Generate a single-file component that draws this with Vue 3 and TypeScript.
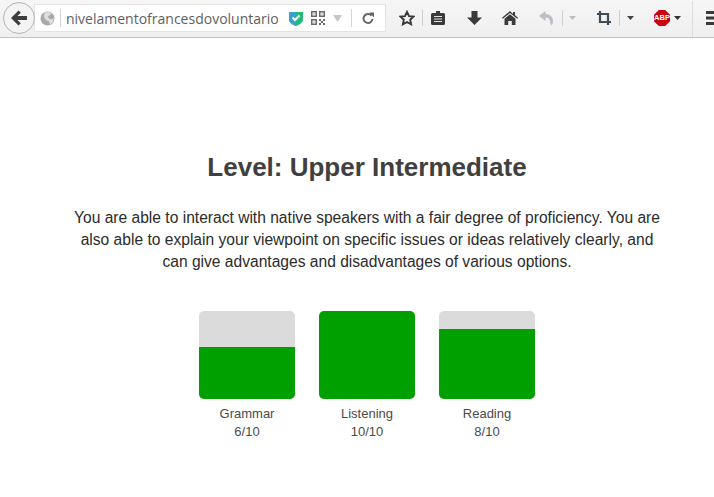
<script setup lang="ts">
interface Score { name: string; value: number }
const barHeight = 88
const scores: Score[] = [
  { name: 'Grammar', value: 6 },
  { name: 'Listening', value: 10 },
  { name: 'Reading', value: 8 },
]
const fillHeight = (value: number): string => Math.floor((barHeight * value) / 10) + 'px'
</script>

<template>
  <div class="page">
    <header class="toolbar">
      <button class="back">
        <svg width="18" height="16" viewBox="0 0 18 16"><path d="M8.500 0.500 1 8l7.500 7.500 2.300-2.300L7.400 10H17V6H7.400l3.400-3.200z" fill="#3d3d3d"/></svg>
      </button>
      <div class="urlbar">
        <svg class="globe" width="15" height="15" viewBox="0 0 15 15"><circle cx="7.500" cy="7.500" r="7" fill="#a9a9a9"/><path d="M4.500 1.500 9 1l2.500 1.800L8 5.500l1 2.300 3 .4 1.700-1.400-.7 4-3 3-1-3.600-3-1-2-3.200z" fill="#dedede"/></svg>
        <span class="vsep first"></span>
        <span class="url">nivelamentofrancesdovoluntario</span>
        <svg class="shield" width="14" height="15" viewBox="0 0 14 15"><path d="M0 1h14v7.500c0 3-3 5-7 6.500-4-1.500-7-3.500-7-6.500z" fill="#25b97c"/><path d="M0 1h7v14c-4-1.500-7-3.500-7-6.500z" fill="#3c9fd8"/><path d="m3.500 6.500 2.500 2.500 4.500-4.500" fill="none" stroke="#fff" stroke-width="2"/></svg>
        <svg class="qr" width="14" height="14" viewBox="0 0 14 14" fill="#6a6a6a"><path d="M0 0h6v6H0zm1.500 1.500v3h3v-3zM8 0h6v6H8zm1.500 1.500v3h3v-3zM0 8h6v6H0zm1.500 1.500v3h3v-3z" fill-rule="evenodd"/><path d="M2.500 2.500h1v1h-1zm8 0h1v1h-1zm-8 8h1v1h-1zM8 8h2v2H8zm4 0h2v2h-2zm-2 2h2v2h-2zm-2 2h2v2H8zm4 0h2v2h-2z"/></svg>
        <svg class="drop" width="9" height="7" viewBox="0 0 9 7"><path d="M0 0h9L4.500 7z" fill="#c6c6c6"/></svg>
        <span class="vsep second"></span>
        <svg class="reload" width="12" height="12" viewBox="0 0 12 12"><path d="M9.500 3.600A4.500 4.500 0 1 0 10.500 7" fill="none" stroke="#666" stroke-width="2"/><path d="M7 0.500h5V5.500z" fill="#666"/></svg>
      </div>
      <div class="tools">
        <svg class="t-star" width="16" height="16" viewBox="0 0 16 16"><path d="m8 1.800 2 4.300 4.500.5-3.300 3.100.9 4.600L8 12l-4.100 2.300.9-4.600L1.500 6.600 6 6.100z" fill="none" stroke="#383838" stroke-width="1.900"/></svg>
        <span class="tsep s1"></span>
        <svg class="t-clip" width="14" height="14" viewBox="0 0 14 14"><path d="M5 0h4v2h3.500A1.500 1.500 0 0 1 14 3.500v9a1.500 1.500 0 0 1-1.500 1.500h-11A1.500 1.500 0 0 1 0 12.500v-9A1.500 1.500 0 0 1 1.500 2H5z" fill="#3a3a3a"/><path d="M3 5h8v1H3zm0 2.500h8v1H3zM3 10h8v1H3z" fill="#e0e0e0"/></svg>
        <svg class="t-down" width="15" height="14" viewBox="0 0 15 14"><path d="M4.500 0h6v6.500H15L7.500 14 0 6.500h4.500z" fill="#3a3a3a"/></svg>
        <svg class="t-home" width="16" height="14" viewBox="0 0 16 14"><path d="M8 0 0 6.800l.8 1L8 1.900l7.200 5.900.8-1-3-2.600V1h-2v1.900z" fill="#3a3a3a"/><path d="M8 3.200 2.500 7.800V14h3.700v-4h3.600v4h3.700V7.800z" fill="#3a3a3a"/></svg>
        <svg class="t-undo" width="14" height="14" viewBox="0 0 14 14"><path d="M6.500 0 0 5l6.500 5V6.500c2.500 0 4 1 4.500 3.500.2 2 .5 4 1.500 4 1 0 1.500-2 1.500-4 0-4-3-7-7.500-7z" fill="#bcc0c4"/></svg>
        <span class="tsep s2"></span>
        <svg class="t-caret c1" width="7" height="4" viewBox="0 0 7 4"><path d="M0 0h7L3.500 4z" fill="#bdbdbd"/></svg>
        <svg class="t-crop" width="14" height="14" viewBox="0 0 14 14"><path d="M3 0v11h11M0 3h11v11" fill="none" stroke="#3f4c58" stroke-width="2.200"/></svg>
        <span class="tsep s3"></span>
        <svg class="t-caret c2" width="7" height="4" viewBox="0 0 7 4"><path d="M0 0h7L3.500 4z" fill="#444"/></svg>
        <span class="abp">ABP</span>
        <svg class="t-caret c3" width="7" height="4" viewBox="0 0 7 4"><path d="M0 0h7L3.500 4z" fill="#333"/></svg>
        <span class="tsep s4"></span>
        <svg class="t-menu" width="12" height="14" viewBox="0 0 12 14"><path d="M0 0h12v3H0zm0 5.500h12v3H0zM0 11h12v3H0z" fill="#3a3a3a"/></svg>
      </div>
    </header>

    <main class="content">
      <h1 class="title">Level: Upper Intermediate</h1>
      <p class="desc">You are able to interact with native speakers with a fair degree of proficiency. You are also able to explain your viewpoint on specific issues or ideas relatively clearly, and can give advantages and disadvantages of various options.</p>
      <div class="scores">
        <div v-for="s in scores" :key="s.name" class="score">
          <div class="bar"><div class="fill" :style="{ height: fillHeight(s.value) }"></div></div>
          <div class="label">{{ s.name }}<br />{{ s.value }}/10</div>
        </div>
      </div>
    </main>
  </div>
</template>

<style>
html, body { margin: 0; background: #fff; overflow: hidden; }
</style>

<style scoped>
.page { width: 714px; height: 497px; font-family: "Liberation Sans", Arial, sans-serif; color: #333; overflow: hidden; }
.toolbar { height: 37px; display: flex; align-items: center; background: linear-gradient(#f6f6f6, #efefef); border-bottom: 1px solid #c4c4c4; }
.back { flex: none; width: 32px; height: 32px; margin-left: 3px; margin-top: -1px; border-radius: 50%; border: 1px solid #b4b4b4; background: #f4f4f4; padding: 0; display: flex; align-items: center; justify-content: center; position: relative; z-index: 1; box-sizing: border-box; }
.urlbar { flex: none; width: 352px; height: 28px; margin-left: -1px; margin-top: -1px; background: #fff; border: 1px solid #e4e4e4; box-sizing: border-box; display: flex; align-items: center; }
.globe { margin-left: 5px; flex: none; }
.vsep { width: 1px; height: 18px; background: #d4d4d4; flex: none; }
.vsep.first { margin-left: 5px; }
.url { margin-left: 5px; font-family: "Open Sans", sans-serif; font-size: 14px; color: #5f5f5f; width: 214px; white-space: nowrap; overflow: hidden; flex: none; }
.shield { margin-left: 9px; flex: none; }
.qr { margin-left: 8px; flex: none; }
.drop { margin-left: 8px; flex: none; }
.vsep.second { margin-left: 9px; }
.reload { margin-left: 10px; flex: none; }
.tools { flex: 1; display: flex; align-items: center; height: 100%; margin-top: -1px; }
.tools svg { flex: none; }
.tsep { width: 1px; height: 16px; background: #ccd0d3; flex: none; }
.t-star { margin-left: 13px; }
.s1 { margin-left: 7px; }
.t-clip { margin-left: 8px; }
.t-down { margin-left: 22px; }
.t-home { margin-left: 20px; }
.t-undo { margin-left: 21px; }
.s2 { margin-left: 9px; }
.c1 { margin-left: 6px; }
.t-crop { margin-left: 21px; }
.s3 { margin-left: 8px; }
.c2 { margin-left: 7px; }
.abp { margin-left: 20px; width: 16px; height: 16px; background: #c8000f; clip-path: polygon(30% 0, 70% 0, 100% 30%, 100% 70%, 70% 100%, 30% 100%, 0 70%, 0 30%); color: #fff; font-size: 7.5px; font-weight: bold; line-height: 16px; text-align: center; flex: none; white-space: nowrap; }
.c3 { margin-left: 4px; }
.s4 { margin-left: 11px; height: 35px; background: #dcdcdc; }
.t-menu { margin-left: 13px; }
.content { display: flex; flex-direction: column; align-items: center; padding-left: 20px; }
.title { margin: 114px 0 0; font-size: 26px; line-height: 30px; font-weight: bold; color: #404040; }
.desc { width: 594px; margin: 25px 0 0; font-size: 15.6px; line-height: 22px; text-align: center; color: #2b2b2b; }
.scores { display: flex; gap: 24px; margin-top: 38px; }
.score { width: 96px; text-align: center; }
.bar { height: 88px; background: #dbdbdb; border-radius: 5px; overflow: hidden; display: flex; flex-direction: column; justify-content: flex-end; }
.fill { background: #00a000; }
.label { margin-top: 6px; font-size: 13px; line-height: 18px; color: #4a4a4a; }
</style>
